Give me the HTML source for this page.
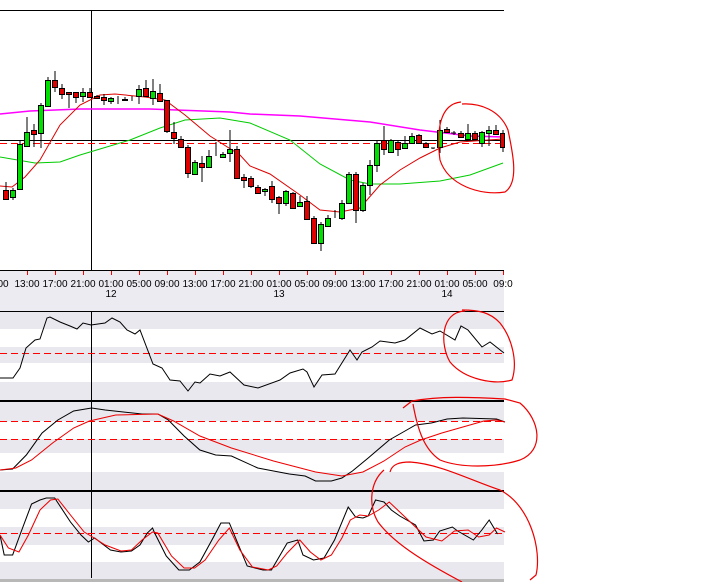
<!DOCTYPE html>
<html><head><meta charset="utf-8"><style>
html,body{margin:0;padding:0;background:#fff;width:701px;height:582px;overflow:hidden}
svg{display:block;font-family:"Liberation Sans",sans-serif}
</style></head><body>
<svg width="701" height="582" viewBox="0 0 701 582" xmlns="http://www.w3.org/2000/svg">
<rect x="0" y="0" width="701" height="582" fill="#fff"/>
<rect x="0" y="270" width="504" height="41" fill="#ecebf2"/>
<g fill="#e8e8ee">
<rect x="0" y="311" width="504" height="18"/><rect x="0" y="347" width="504" height="16"/><rect x="0" y="382" width="504" height="18"/>
<rect x="0" y="402" width="504" height="19"/><rect x="0" y="439" width="504" height="14"/><rect x="0" y="472" width="504" height="18"/>
<rect x="0" y="492" width="504" height="17"/><rect x="0" y="527" width="504" height="18"/><rect x="0" y="562" width="504" height="18"/>
</g>
<rect x="0" y="579" width="504" height="3" fill="#b8b8b8"/>
<g stroke="#000" stroke-width="1" shape-rendering="crispEdges">
<line x1="0" y1="10.5" x2="504" y2="10.5"/>
<line x1="0" y1="270.5" x2="504" y2="270.5"/>
<line x1="0" y1="311.5" x2="504" y2="311.5"/>
<line x1="0" y1="400.5" x2="504" y2="400.5"/><line x1="0" y1="401.5" x2="504" y2="401.5"/>
<line x1="0" y1="490.5" x2="504" y2="490.5"/><line x1="0" y1="491.5" x2="504" y2="491.5"/>
<line x1="0" y1="140.5" x2="504" y2="140.5"/>
<line x1="91.5" y1="10" x2="91.5" y2="270"/>
<line x1="91.5" y1="311" x2="91.5" y2="400"/>
<line x1="91.5" y1="402" x2="91.5" y2="490"/>
<line x1="91.5" y1="492" x2="91.5" y2="578"/>
</g>
<g stroke="#f00" stroke-width="1" stroke-dasharray="7,4" shape-rendering="crispEdges">
<line x1="0" y1="143.5" x2="504" y2="143.5"/>
<line x1="0" y1="353.5" x2="504" y2="353.5"/>
<line x1="0" y1="421.5" x2="504" y2="421.5"/>
<line x1="0" y1="439.5" x2="504" y2="439.5"/>
<line x1="0" y1="533.5" x2="504" y2="533.5"/>
</g>
<g stroke="#f00" shape-rendering="crispEdges">
<path d="M27.5 271v4M55.5 271v4M83.5 271v4M111.5 271v4M139.5 271v4M167.5 271v4M195.5 271v4M223.5 271v4M251.5 271v4M279.5 271v4M307.5 271v4M335.5 271v4M363.5 271v4M391.5 271v4M419.5 271v4M447.5 271v4M475.5 271v4M503.5 271v4"/>
</g>
<g font-size="10" fill="#000" text-anchor="middle">
<text x="3" y="287">00</text>
<text x="27" y="287">13:00</text><text x="55" y="287">17:00</text><text x="83" y="287">21:00</text>
<text x="111" y="287">01:00</text><text x="139" y="287">05:00</text><text x="167" y="287">09:00</text>
<text x="195" y="287">13:00</text><text x="223" y="287">17:00</text><text x="251" y="287">21:00</text>
<text x="279" y="287">01:00</text><text x="307" y="287">05:00</text><text x="335" y="287">09:00</text>
<text x="363" y="287">13:00</text><text x="391" y="287">17:00</text><text x="419" y="287">21:00</text>
<text x="447" y="287">01:00</text><text x="475" y="287">05:00</text><text x="503" y="287">09:0</text>
<text x="111" y="297">12</text><text x="279" y="297">13</text><text x="447" y="297">14</text>
</g>
<polyline fill="none" stroke="#f0f" stroke-width="1.5" points="0,114 30,111 80,109 150,109 230,112 250,114 300,116 370,122 420,130 470,136 504,137"/>
<polyline fill="none" stroke="#0c0" stroke-width="1" points="0,157 35,163 60,162 80,155 100,149 130,140 160,128 185,120 220,118 250,123 290,140 320,164 350,180 370,184 400,184 440,181 470,175 503,163"/>
<polyline fill="none" stroke="#d00" stroke-width="1" points="0,186 12,187 25,177 40,160 60,125 80,105 100,95 115,94 145,97 165,100 185,115 210,136 240,155 250,166 270,174 300,195 320,210 340,212 360,208 380,185 400,170 420,158 440,148 460,142 503,139"/>
<g stroke="#000" stroke-width="1">
<path d="M6 182v18M13 188v12M20 140v50M27 117v30M34 124v23M41 103v45M48 77v30M55 71v21M62 84v15M69 92v16M76 92v11M83 88v14M90 88v10M97 95v4M104 94v11M111 97v7M118 96v8M125 97v4M132 96v5M139 85v19M146 80v17M153 79v26M160 84v18M167 100v33M174 122v22M181 136v12M188 145v33M195 160v15M202 156v26M209 150v18M216 142v14M223 152v6M230 130v32M237 146v33M244 174v14M251 176v12M258 185v9M265 188v8M272 181v22M279 196v18M286 190v16M293 192v17M300 196v11M307 196v23M314 216v28M321 222v29M328 215v11M335 210v8M342 200v20M349 172v32M356 172v51M363 183v29M370 160v35M377 141v31M384 126v29M391 139v14M398 140v16M405 136v13M412 133v10M419 134v10M426 142v6M433 148v1M440 120v33M447 127v6M454 131v4M461 131v7M468 124v16M475 131v9M482 131v16M489 126v20M496 125v10M503 130v22"/>
<path d="M431 148h4M451 133h5"/>
</g>
<g stroke="#000" stroke-width="1" fill="#e00000">
<rect x="3.5" y="190.5" width="5" height="9"/><rect x="31.5" y="130.5" width="5" height="4"/><rect x="52.5" y="80.5" width="5" height="7"/><rect x="59.5" y="88.5" width="5" height="6"/><rect x="66.5" y="92.5" width="5" height="2"/><rect x="73.5" y="92.5" width="5" height="5"/><rect x="87.5" y="92.5" width="5" height="5"/><rect x="94.5" y="96.5" width="5" height="2"/><rect x="101.5" y="97.5" width="5" height="3"/><rect x="122.5" y="99.5" width="5" height="1"/><rect x="143.5" y="88.5" width="5" height="8"/><rect x="157.5" y="93.5" width="5" height="8"/><rect x="164.5" y="100.5" width="5" height="31"/><rect x="171.5" y="132.5" width="5" height="6"/><rect x="178.5" y="139.5" width="5" height="8"/><rect x="185.5" y="147.5" width="5" height="26"/><rect x="199.5" y="163.5" width="5" height="4"/><rect x="234.5" y="149.5" width="5" height="29"/><rect x="241.5" y="177.5" width="5" height="3"/><rect x="248.5" y="178.5" width="5" height="8"/><rect x="255.5" y="187.5" width="5" height="6"/><rect x="269.5" y="186.5" width="5" height="13"/><rect x="276.5" y="197.5" width="5" height="6"/><rect x="290.5" y="193.5" width="5" height="15"/><rect x="304.5" y="201.5" width="5" height="18"/><rect x="311.5" y="218.5" width="5" height="25"/><rect x="353.5" y="174.5" width="5" height="36"/><rect x="381.5" y="140.5" width="5" height="9"/><rect x="395.5" y="142.5" width="5" height="7"/><rect x="416.5" y="135.5" width="5" height="8"/><rect x="423.5" y="143.5" width="5" height="4"/><rect x="444.5" y="129.5" width="5" height="3"/><rect x="458.5" y="133.5" width="5" height="4"/><rect x="472.5" y="133.5" width="5" height="6"/><rect x="493.5" y="130.5" width="5" height="4"/><rect x="500.5" y="133.5" width="4" height="14"/>
</g>
<g stroke="#000" stroke-width="1" fill="#00e000">
<rect x="10.5" y="190.5" width="5" height="7"/><rect x="17.5" y="144.5" width="5" height="45"/><rect x="24.5" y="132.5" width="5" height="14"/><rect x="38.5" y="105.5" width="5" height="28"/><rect x="45.5" y="80.5" width="5" height="26"/><rect x="80.5" y="92.5" width="5" height="4"/><rect x="108.5" y="98.5" width="5" height="3"/><rect x="136.5" y="89.5" width="5" height="7"/><rect x="150.5" y="91.5" width="5" height="7"/><rect x="192.5" y="162.5" width="5" height="12"/><rect x="206.5" y="156.5" width="5" height="11"/><rect x="220.5" y="154.5" width="5" height="3"/><rect x="227.5" y="149.5" width="5" height="4"/><rect x="262.5" y="189.5" width="5" height="2"/><rect x="283.5" y="191.5" width="5" height="12"/><rect x="297.5" y="202.5" width="5" height="4"/><rect x="318.5" y="224.5" width="5" height="19"/><rect x="325.5" y="218.5" width="5" height="8"/><rect x="339.5" y="203.5" width="5" height="15"/><rect x="346.5" y="174.5" width="5" height="29"/><rect x="360.5" y="185.5" width="5" height="25"/><rect x="367.5" y="165.5" width="5" height="20"/><rect x="374.5" y="143.5" width="5" height="22"/><rect x="388.5" y="140.5" width="5" height="12"/><rect x="402.5" y="143.5" width="5" height="5"/><rect x="409.5" y="136.5" width="5" height="7"/><rect x="437.5" y="130.5" width="5" height="17"/><rect x="465.5" y="133.5" width="5" height="6"/><rect x="479.5" y="132.5" width="5" height="11"/><rect x="486.5" y="130.5" width="5" height="3"/>
</g>
<polyline fill="none" stroke="#000" stroke-width="1" points="0,378 13,378 20,368 26,348 35,340 40,339 47,318 50,317 60,322 70,326 77,329 83,323 91,325 105,323 112,318 120,322 127,330 135,334 140,330 153,364 162,368 170,380 180,381 188,391 195,382 200,383 210,374 220,376 230,372 244,385 258,388 280,380 290,373 303,369 307,372 314,387 322,375 335,374 350,350 357,360 362,352 372,347 380,341 395,343 405,340 420,328 432,334 440,331 455,340 461,326 468,330 482,347 490,342 504,353"/>
<g transform="scale(1.052,1)">
<polyline fill="none" stroke="#000" stroke-width="1" points="0,470 12,469 25,455 40,433 55,420 70,411 87,408 100,410 135,414 150,414 160,420 175,436 190,450 205,455 220,456 245,468 275,474 290,476 300,481 315,481 325,478 335,471 350,458 370,440 385,431 395,425 410,423 425,419 440,418 472,419 480,422"/>
<polyline fill="none" stroke="#e00" stroke-width="1" points="0,470 15,468 30,460 50,443 70,428 85,421 110,415 150,414 165,421 190,436 220,448 260,461 300,472 325,476 345,472 365,461 385,447 400,440 420,433 440,427 460,421 472,420 480,422"/>
<polyline fill="none" stroke="#000" stroke-width="1" points="0,535 4,555 12,555 20,532 30,504 38,500 44,498 52,498 67,522 77,535 84,542 90,538 105,550 115,552 125,551 133,545 140,533 145,528 147,533 158,556 170,570 180,570 190,562 203,537 210,523 218,523 235,566 250,570 258,570 268,552 273,543 283,540 288,555 298,560 308,558 318,540 331,507 338,517 345,518 350,516 357,500 365,502 372,510 380,516 395,525 403,541 412,540 418,531 430,527 435,531 450,540 458,530 465,520 473,534"/>
<polyline fill="none" stroke="#e00" stroke-width="1" points="0,535 8,548 18,552 27,535 38,510 48,500 55,499 67,515 80,532 88,537 100,545 115,551 125,550 135,540 145,532 150,533 163,556 175,568 185,568 195,560 208,540 218,528 228,550 240,567 255,570 263,566 273,553 285,540 295,552 305,560 315,555 325,538 333,520 342,515 350,516 360,510 370,502 378,510 390,522 405,537 420,541 432,531 445,530 455,537 465,535 472,528 480,532"/>
</g>
<g fill="none" stroke="#e00" stroke-width="1.2">
<path d="M461 102 C440 104 436 130 440 160 C448 185 480 196 505 192 C520 182 512 150 508 130 C500 110 480 103 462 104"/>
<path d="M465 311 C440 312 440 345 450 362 C465 380 495 385 512 380 C518 362 512 338 500 323 C490 312 478 310 462 310"/>
<path d="M403 408 L412 401 C440 396 470 397 505 399 L520 403 C540 420 545 450 520 460 C495 468 460 468 440 460 C425 450 418 432 413 404"/>
<path d="M390 472 C392 464 400 462 410 462 C440 464 470 480 500 490 C530 505 542 550 536 575 L530 580 M384 470 C370 482 368 505 378 522 C395 545 430 565 462 582"/>
</g>
</svg>
</body></html>
